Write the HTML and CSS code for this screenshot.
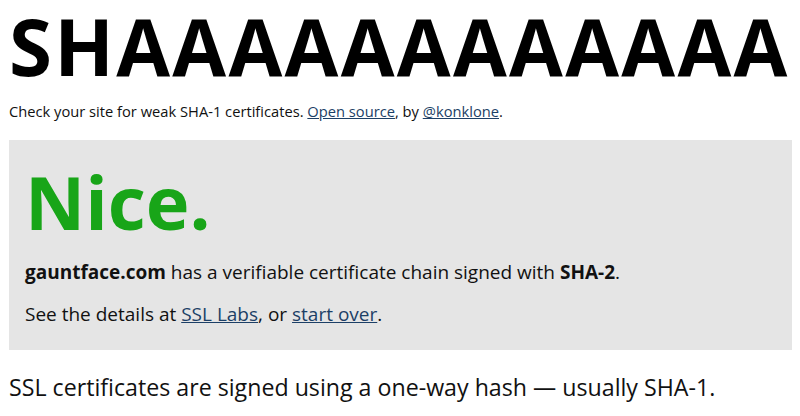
FILE: index.html
```html
<!DOCTYPE html>
<html>
<head>
<meta charset="utf-8">
<link rel="stylesheet" href="styles.css">
</head>
<body>
<h1 class="title">SHAAAAAAAAAAAA</h1>
<p class="intro">Check your site for weak SHA-1 certificates. <a href="#">Open source</a>, by <a href="#">@konklone</a>.</p>
<section class="result">
  <h2 class="verdict">Nice.</h2>
  <p><strong>gauntface.com</strong> has a verifiable certificate chain signed with <strong>SHA-2</strong>.</p>
  <p>See the details at <a href="#">SSL Labs</a>, or <a href="#">start over</a>.</p>
</section>
<p class="explain">SSL certificates are signed using a one-way hash — usually SHA-1.</p>
</body>
</html>
```

FILE: styles.css
```css
html, body {
  margin: 0;
  padding: 0;
  background: #fff;
}
body {
  font-family: "Open Sans", sans-serif;
  color: #111;
  padding: 0 0 0 9px;
}
a {
  color: #1c3f66;
}
.title {
  font-size: 78px;
  font-weight: 700;
  margin: 0;
  line-height: 92px;
  color: #000;
  letter-spacing: 2.3px;
  white-space: nowrap;
}
.intro {
  font-size: 14.7px;
  margin: 9px 0 0 0;
  line-height: 20px;
}
.result {
  background: #e5e5e5;
  margin: 19px 8px 0 0;
  padding: 17px 15px 23px 16px;
}
.verdict {
  color: #18a518;
  font-size: 74px;
  font-weight: 700;
  margin: 0;
  line-height: 90px;
}
.result p {
  font-size: 19px;
  margin: 12px 0 0;
  line-height: 26px;
}
.result p + p {
  margin-top: 16px;
}
.explain {
  font-size: 23.2px;
  margin: 21px 0 0;
  line-height: 32px;
}
```
